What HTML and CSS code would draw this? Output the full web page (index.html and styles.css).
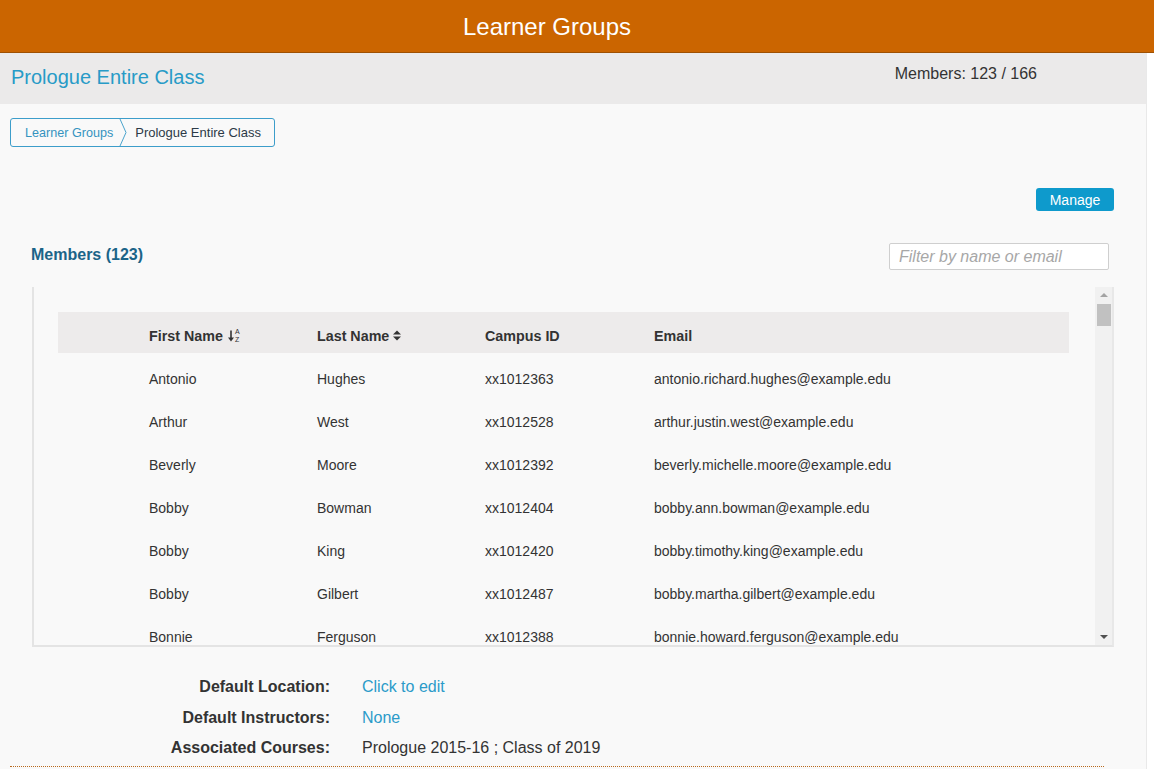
FILE: index.html
```html
<!DOCTYPE html>
<html>
<head>
<meta charset="utf-8">
<title>Learner Groups</title>
<link rel="stylesheet" href="styles.css">
</head>
<body>
<header class="topbar"><h1 class="topbar-title">Learner Groups</h1></header>
<div class="main">
  <div class="band">
    <h2 class="group-title">Prologue Entire Class</h2>
    <div class="member-count">Members: 123 / 166</div>
  </div>
  <nav class="crumbs">
    <a class="crumb-link">Learner Groups</a>
    <svg class="crumb-sep" width="9" height="27" viewBox="0 0 9 27"><polyline points="1,0 7,13.5 1,27" fill="none" stroke="#4aa3cc" stroke-width="1"/></svg>
    <span class="crumb-current">Prologue Entire Class</span>
  </nav>
  <section class="content">
    <div class="actions"><button class="btn-manage">Manage</button></div>
    <div class="members-head">
      <h3 class="members-title">Members (123)</h3>
      <input class="filter" type="text" placeholder="Filter by name or email">
    </div>
    <div class="table-box">
      <div class="table-area">
        <div class="row head">
          <span></span>
          <span class="th">First Name
            <span class="sort-alpha">
              <svg width="6" height="12" viewBox="0 0 6 12"><path d="M3 0.5v8" stroke="#333" stroke-width="1.6"/><path d="M0 7.5h6l-3 4z" fill="#333"/></svg>
              <span class="az"><span>A</span><span>Z</span></span>
            </span>
          </span>
          <span class="th">Last Name
            <svg class="sort" width="8" height="11" viewBox="0 0 8 11"><path d="M0 4.5L4 0.5 8 4.5z M0 6.5h8L4 10.5z" fill="#333"/></svg>
          </span>
          <span class="th">Campus ID</span>
          <span class="th">Email</span>
        </div>
        <div class="rows">
          <div class="row"><span></span><span>Antonio</span><span>Hughes</span><span>xx1012363</span><span>antonio.richard.hughes@example.edu</span></div>
          <div class="row"><span></span><span>Arthur</span><span>West</span><span>xx1012528</span><span>arthur.justin.west@example.edu</span></div>
          <div class="row"><span></span><span>Beverly</span><span>Moore</span><span>xx1012392</span><span>beverly.michelle.moore@example.edu</span></div>
          <div class="row"><span></span><span>Bobby</span><span>Bowman</span><span>xx1012404</span><span>bobby.ann.bowman@example.edu</span></div>
          <div class="row"><span></span><span>Bobby</span><span>King</span><span>xx1012420</span><span>bobby.timothy.king@example.edu</span></div>
          <div class="row"><span></span><span>Bobby</span><span>Gilbert</span><span>xx1012487</span><span>bobby.martha.gilbert@example.edu</span></div>
          <div class="row"><span></span><span>Bonnie</span><span>Ferguson</span><span>xx1012388</span><span>bonnie.howard.ferguson@example.edu</span></div>
        </div>
      </div>
      <div class="scrollbar">
        <span class="arrow-up"></span>
        <span class="thumb"></span>
        <span class="track"></span>
        <span class="arrow-down"></span>
      </div>
    </div>
  </section>
  <div class="details">
    <div class="detail-row"><span class="label">Default Location:</span><span class="value link">Click to edit</span></div>
    <div class="detail-row"><span class="label">Default Instructors:</span><span class="value link">None</span></div>
    <div class="detail-row"><span class="label">Associated Courses:</span><span class="value">Prologue 2015-16 ; Class of 2019</span></div>
  </div>
</div>
</body>
</html>
```
FILE: styles.css
```css
* { box-sizing: border-box; }
html, body { margin: 0; padding: 0; }
body {
  background: #ffffff;
  font-family: "Liberation Sans", Arial, sans-serif;
  color: #333333;
}
.topbar {
  height: 53px;
  background: #cb6500;
  border-bottom: 1px solid #9e5103;
  padding-right: 60px;
  overflow: hidden;
}
.topbar-title {
  margin: 0;
  text-align: center;
  color: #ffffff;
  font-weight: normal;
  font-size: 24px;
  line-height: 54px;
}
.main {
  width: 1147px;
  background: #f9f9f9;
  border-right: 1px solid #e9e9e9;
  padding-bottom: 2px;
}
.band {
  height: 51px;
  background: #ebeaea;
  display: flex;
  justify-content: space-between;
  align-items: flex-start;
  padding-left: 11px;
}
.group-title {
  margin: 12px 0 0;
  font-weight: normal;
  font-size: 20px;
  line-height: 24px;
  color: #279bc7;
}
.member-count {
  margin: 11px 109px 0 0;
  font-size: 16px;
  line-height: 20px;
  color: #333;
}
.crumbs {
  margin: 14px 0 0 10px;
  display: inline-flex;
  align-items: center;
  height: 29px;
  border: 1px solid #3c9dca;
  border-radius: 3px;
  padding: 0 13px 0 14px;
  font-size: 12.6px;
}
.crumb-link { color: #3593bf; }
.crumb-sep { margin: 0 7px 0 6px; display: block; }
.crumb-current { color: #2c3a47; font-size: 13px; }
.content {
  padding: 0 32px 0 32px;
}
.actions {
  display: flex;
  justify-content: flex-end;
  margin-top: 41px;
}
.btn-manage {
  width: 78px;
  height: 23px;
  border: none;
  border-radius: 3px;
  background: #0e9acc;
  color: #fff;
  font-family: "Liberation Sans", Arial, sans-serif;
  font-size: 14px;
  padding: 0;
}
.members-head {
  display: flex;
  justify-content: space-between;
  align-items: center;
  margin-top: 32px;
  padding-right: 5px;
}
.members-title {
  margin: 0 0 0 -1px;
  font-size: 16px;
  font-weight: bold;
  color: #1b6488;
  position: relative;
  top: -2px;
}
.filter {
  width: 220px;
  height: 27px;
  border: 1px solid #cfcfcf;
  border-radius: 2px;
  background: #fff;
  padding: 0 9px;
  font-family: "Liberation Sans", Arial, sans-serif;
  font-size: 16px;
  font-style: italic;
}
.filter::placeholder { color: #a7a7a7; }
.table-box {
  margin-top: 17px;
  height: 360px;
  display: flex;
  border-left: 2px solid #e4e4e4;
  border-right: 2px solid #e8e8e8;
  border-bottom: 2px solid #e4e4e4;
}
.table-area {
  flex: 1;
  overflow: hidden;
  padding: 25px 26px 0 24px;
}
.row {
  display: grid;
  grid-template-columns: 91px 168px 168px 169px 1fr;
  align-items: center;
  height: 43px;
  font-size: 14px;
  color: #333;
}
.row.head {
  height: 41px;
  padding-top: 6px;
  background: #edebeb;
  font-weight: bold;
  font-size: 14.3px;
  color: #333;
}
.rows { padding-top: 4px; }
.th { display: flex; align-items: center; }
.sort-alpha { display: inline-flex; align-items: center; margin-left: 5px; gap: 1px; }
.az { display: inline-flex; flex-direction: column; font-size: 7px; line-height: 8px; font-weight: normal; }
.sort { margin-left: 4px; }
.scrollbar {
  width: 17px;
  background: #f1f1f1;
  display: flex;
  flex-direction: column;
  align-items: center;
}
.arrow-up {
  margin-top: 6px;
  width: 0; height: 0;
  border-left: 4px solid transparent;
  border-right: 4px solid transparent;
  border-bottom: 4px solid #a3a3a3;
}
.thumb {
  margin-top: 7px;
  width: 14px;
  height: 22px;
  background: #c1c1c1;
}
.track { flex: 1; }
.arrow-down {
  margin-bottom: 6px;
  width: 0; height: 0;
  border-left: 4px solid transparent;
  border-right: 4px solid transparent;
  border-top: 4px solid #505050;
}
.details {
  margin: 25px 42px 0 10px;
  padding-bottom: 2px;
  border-bottom: 1px dotted #b86a1e;
  display: flex;
  flex-direction: column;
  font-size: 16px;
}
.detail-row {
  display: flex;
  gap: 32px;
  height: 30.5px;
  line-height: 30px;
}
.label {
  width: 320px;
  text-align: right;
  font-weight: bold;
  color: #333;
}
.value { color: #333; }
.value.link { color: #2b9bc9; }
```
